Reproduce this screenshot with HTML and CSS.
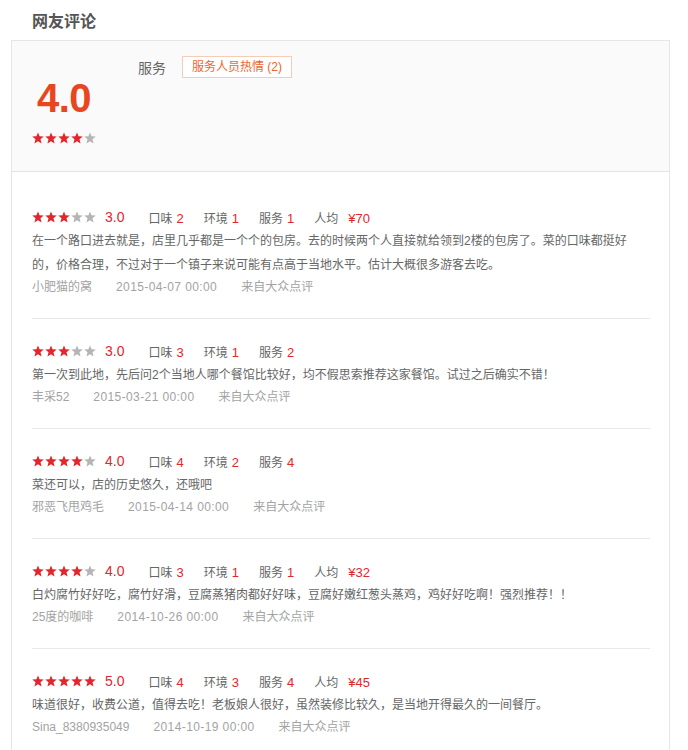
FILE: index.html
```html
<!DOCTYPE html>
<html lang="zh-CN">
<head>
<meta charset="utf-8">
<title>网友评论</title>
<link rel="stylesheet" href="styles.css">
</head>
<body>
<svg class="defs" width="0" height="0" aria-hidden="true">
  <symbol id="star" viewBox="0 0 12 12">
    <polygon points="6,0.4 7.55,4.35 11.75,4.6 8.5,7.3 9.55,11.5 6,9.2 2.45,11.5 3.5,7.3 0.25,4.6 4.45,4.35"/>
  </symbol>
</svg>
<div class="page">
  <h2 class="title">网友评论</h2>
  <div class="card">
    <div class="summary">
      <div class="overall">
        <div class="big-score">4.0</div>
        <div class="stars">
          <svg class="star on"><use href="#star"/></svg><svg class="star on"><use href="#star"/></svg><svg class="star on"><use href="#star"/></svg><svg class="star on"><use href="#star"/></svg><svg class="star off"><use href="#star"/></svg>
        </div>
      </div>
      <div class="tags">
        <span class="tag-label">服务</span>
        <span class="tag">服务人员热情 (2)</span>
      </div>
    </div>

    <ul class="reviews">
      <li class="review">
        <div class="rating">
          <div class="stars">
            <svg class="star on"><use href="#star"/></svg><svg class="star on"><use href="#star"/></svg><svg class="star on"><use href="#star"/></svg><svg class="star off"><use href="#star"/></svg><svg class="star off"><use href="#star"/></svg>
          </div>
          <span class="score">3.0</span>
          <span class="stat">口味<em>2</em></span>
          <span class="stat">环境<em>1</em></span>
          <span class="stat">服务<em>1</em></span>
          <span class="stat">人均<em class="price">¥70</em></span>
        </div>
        <p class="text">在一个路口进去就是，店里几乎都是一个个的包房。去的时候两个人直接就给领到2楼的包房了。菜的口味都挺好的，价格合理，不过对于一个镇子来说可能有点高于当地水平。估计大概很多游客去吃。</p>
        <div class="meta"><span class="user">小肥猫的窝</span><span class="date">2015-04-07 00:00</span><span class="src">来自大众点评</span></div>
      </li>
      <li class="review">
        <div class="rating">
          <div class="stars">
            <svg class="star on"><use href="#star"/></svg><svg class="star on"><use href="#star"/></svg><svg class="star on"><use href="#star"/></svg><svg class="star off"><use href="#star"/></svg><svg class="star off"><use href="#star"/></svg>
          </div>
          <span class="score">3.0</span>
          <span class="stat">口味<em>3</em></span>
          <span class="stat">环境<em>1</em></span>
          <span class="stat">服务<em>2</em></span>
        </div>
        <p class="text">第一次到此地，先后问2个当地人哪个餐馆比较好，均不假思索推荐这家餐馆。试过之后确实不错！</p>
        <div class="meta"><span class="user">丰采52</span><span class="date">2015-03-21 00:00</span><span class="src">来自大众点评</span></div>
      </li>
      <li class="review">
        <div class="rating">
          <div class="stars">
            <svg class="star on"><use href="#star"/></svg><svg class="star on"><use href="#star"/></svg><svg class="star on"><use href="#star"/></svg><svg class="star on"><use href="#star"/></svg><svg class="star off"><use href="#star"/></svg>
          </div>
          <span class="score">4.0</span>
          <span class="stat">口味<em>4</em></span>
          <span class="stat">环境<em>2</em></span>
          <span class="stat">服务<em>4</em></span>
        </div>
        <p class="text">菜还可以，店的历史悠久，还哦吧</p>
        <div class="meta"><span class="user">邪恶飞甩鸡毛</span><span class="date">2015-04-14 00:00</span><span class="src">来自大众点评</span></div>
      </li>
      <li class="review">
        <div class="rating">
          <div class="stars">
            <svg class="star on"><use href="#star"/></svg><svg class="star on"><use href="#star"/></svg><svg class="star on"><use href="#star"/></svg><svg class="star on"><use href="#star"/></svg><svg class="star off"><use href="#star"/></svg>
          </div>
          <span class="score">4.0</span>
          <span class="stat">口味<em>3</em></span>
          <span class="stat">环境<em>1</em></span>
          <span class="stat">服务<em>1</em></span>
          <span class="stat">人均<em class="price">¥32</em></span>
        </div>
        <p class="text">白灼腐竹好好吃，腐竹好滑，豆腐蒸猪肉都好好味，豆腐好嫩红葱头蒸鸡，鸡好好吃啊！强烈推荐！！</p>
        <div class="meta"><span class="user">25度的咖啡</span><span class="date">2014-10-26 00:00</span><span class="src">来自大众点评</span></div>
      </li>
      <li class="review">
        <div class="rating">
          <div class="stars">
            <svg class="star on"><use href="#star"/></svg><svg class="star on"><use href="#star"/></svg><svg class="star on"><use href="#star"/></svg><svg class="star on"><use href="#star"/></svg><svg class="star on"><use href="#star"/></svg>
          </div>
          <span class="score">5.0</span>
          <span class="stat">口味<em>4</em></span>
          <span class="stat">环境<em>3</em></span>
          <span class="stat">服务<em>4</em></span>
          <span class="stat">人均<em class="price">¥45</em></span>
        </div>
        <p class="text">味道很好，收费公道，值得去吃！老板娘人很好，虽然装修比较久，是当地开得最久的一间餐厅。</p>
        <div class="meta"><span class="user">Sina_8380935049</span><span class="date">2014-10-19 00:00</span><span class="src">来自大众点评</span></div>
      </li>
    </ul>
  </div>
</div>
</body>
</html>
```

FILE: styles.css
```css
* { box-sizing: border-box; }

html, body {
  margin: 0;
  padding: 0;
  background: #fff;
}

body {
  font-family: "Liberation Sans", "Noto Sans CJK SC", Arial, sans-serif;
  color: #666;
  font-size: 12px;
}

.defs {
  position: absolute;
  width: 0;
  height: 0;
  overflow: hidden;
}

.page {
  padding: 0 18px 0 11px;
}

.title {
  margin: 0;
  height: 40px;
  line-height: 40px;
  padding-left: 21px;
  font-size: 16px;
  font-weight: bold;
  color: #555;
  font-family: "Noto Sans CJK SC", sans-serif;
}

.card {
  width: 659px;
  border: 1px solid #e6e6e6;
  border-bottom: none;
}

/* summary header */
.summary {
  display: flex;
  align-items: flex-start;
  height: 131px;
  padding: 15px 0 0 20px;
  background: #fafafa;
  border-bottom: 1px solid #e4e4e4;
}

.overall {
  width: 64px;
  padding-top: 22px;
  display: flex;
  flex-direction: column;
  align-items: center;
}

.big-score {
  font-family: "Liberation Sans", Arial, sans-serif;
  font-size: 40px;
  font-weight: bold;
  line-height: 40px;
  color: #e8461e;
  letter-spacing: -0.5px;
}

.overall .stars {
  margin-top: 14px;
}

.stars {
  display: flex;
  gap: 1px;
  height: 12px;
}

.star {
  width: 12px;
  height: 12px;
  display: block;
}

.star.on { fill: #e3262c; }
.star.off { fill: #b5b5b5; }

.tags {
  margin-left: 42px;
  display: flex;
  align-items: center;
  height: 22px;
}

.tag-label {
  font-size: 14px;
  color: #666;
  margin-right: 16px;
}

.tag {
  height: 22px;
  line-height: 20px;
  padding: 0 9px;
  border: 1px solid #f5cdb6;
  background: #fff;
  color: #f0652d;
  font-size: 12px;
}

/* reviews */
.reviews {
  list-style: none;
  margin: 0;
  padding: 13px 19px 0 20px;
}

.review {
  padding: 20px 0 21px;
  border-bottom: 1px solid #e8e8e8;
}

.rating {
  display: flex;
  align-items: center;
  height: 24px;
}

.score {
  margin-left: 9px;
  margin-right: 4px;
  font-size: 14px;
  color: #e3262c;
}

.stat {
  margin-left: 20px;
  font-size: 12px;
  color: #666;
}

.stat em {
  font-style: normal;
  font-size: 13px;
  color: #e3262c;
  margin-left: 4px;
}

.stat em.price {
  margin-left: 10px;
}

.text {
  margin: 0;
  font-size: 12px;
  line-height: 24px;
  color: #666;
}

.meta {
  display: flex;
  line-height: 20px;
  font-size: 12px;
  color: #a3a3a3;
}

.meta span {
  margin-right: 24px;
}

.meta .date {
  letter-spacing: 0.4px;
}
```
